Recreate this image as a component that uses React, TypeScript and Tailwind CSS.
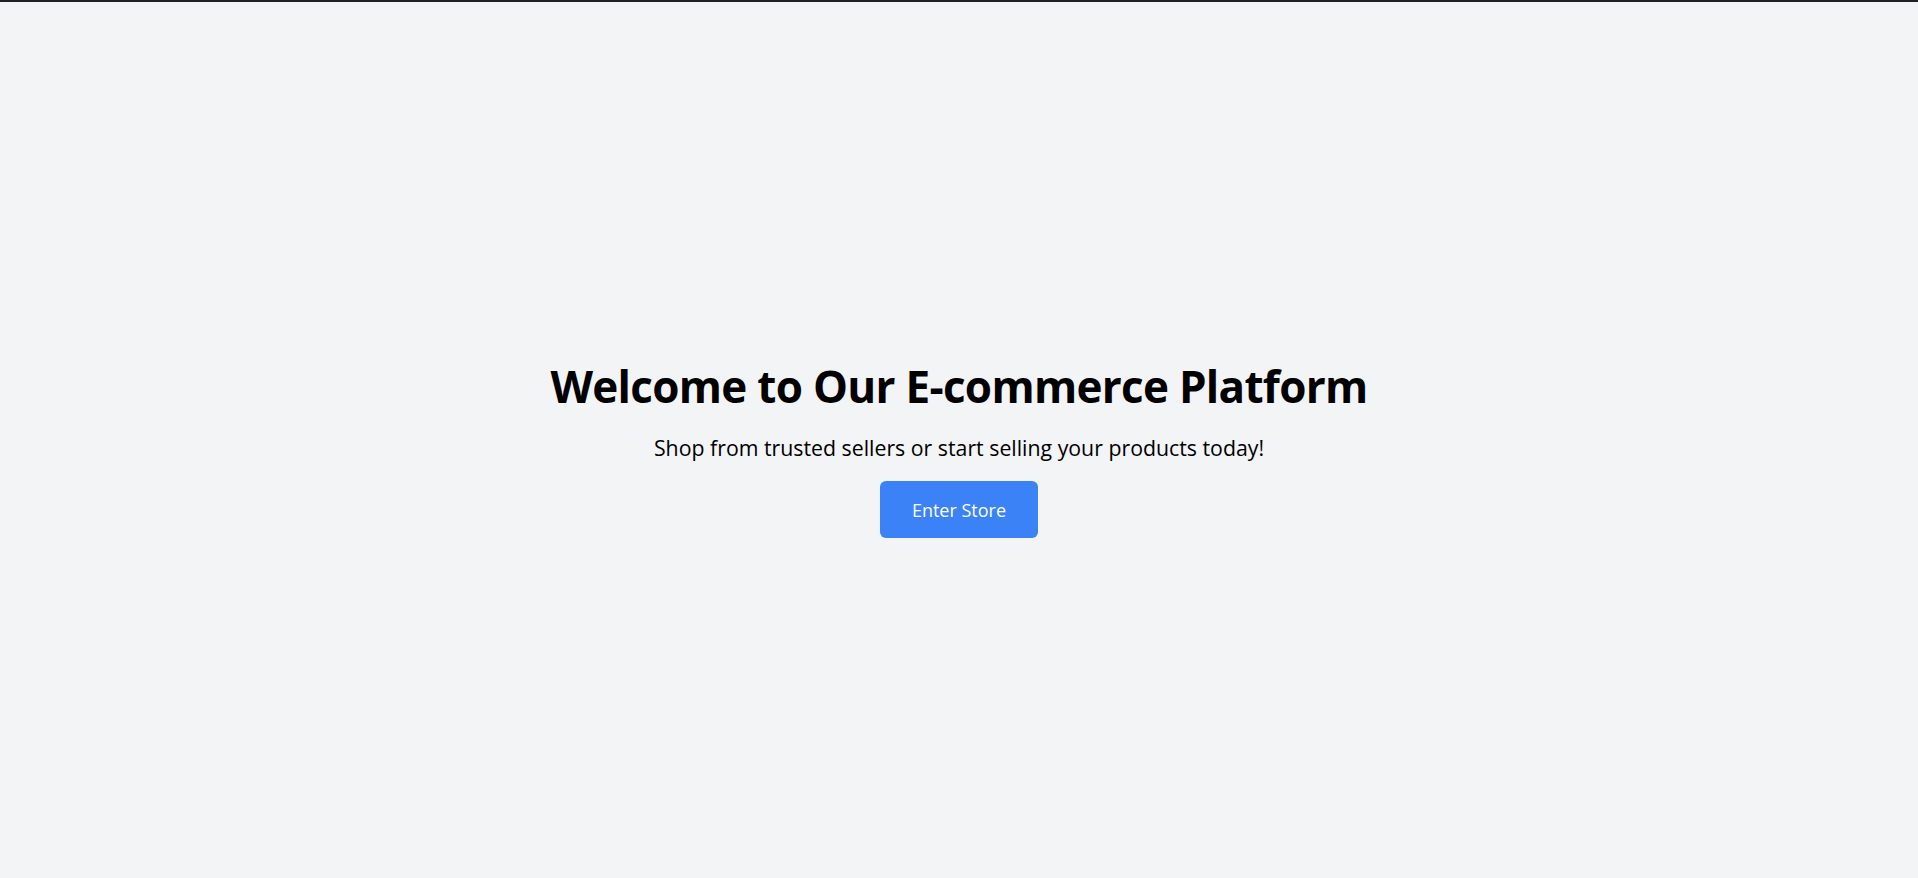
export default function App() {
  return (
    <div className="flex min-h-screen flex-col bg-[#f3f4f6] font-['Open_Sans',sans-serif] text-black">
      <div className="h-[2px] bg-[#202124]" />
      <div className="flex flex-1 flex-col items-center justify-center pt-5 text-center">
        <h1 className="mb-6 text-[44px] leading-[48px] font-bold tracking-[-0.7px]">
          Welcome to Our E-commerce Platform
        </h1>
        <p className="mb-[19px] text-[21.3px] leading-7">
          Shop from trusted sellers or start selling your products today!
        </p>
        <button className="flex h-[57px] items-center rounded-md bg-[#3b82f6] px-8 text-lg text-white">
          Enter Store
        </button>
      </div>
    </div>
  );
}
